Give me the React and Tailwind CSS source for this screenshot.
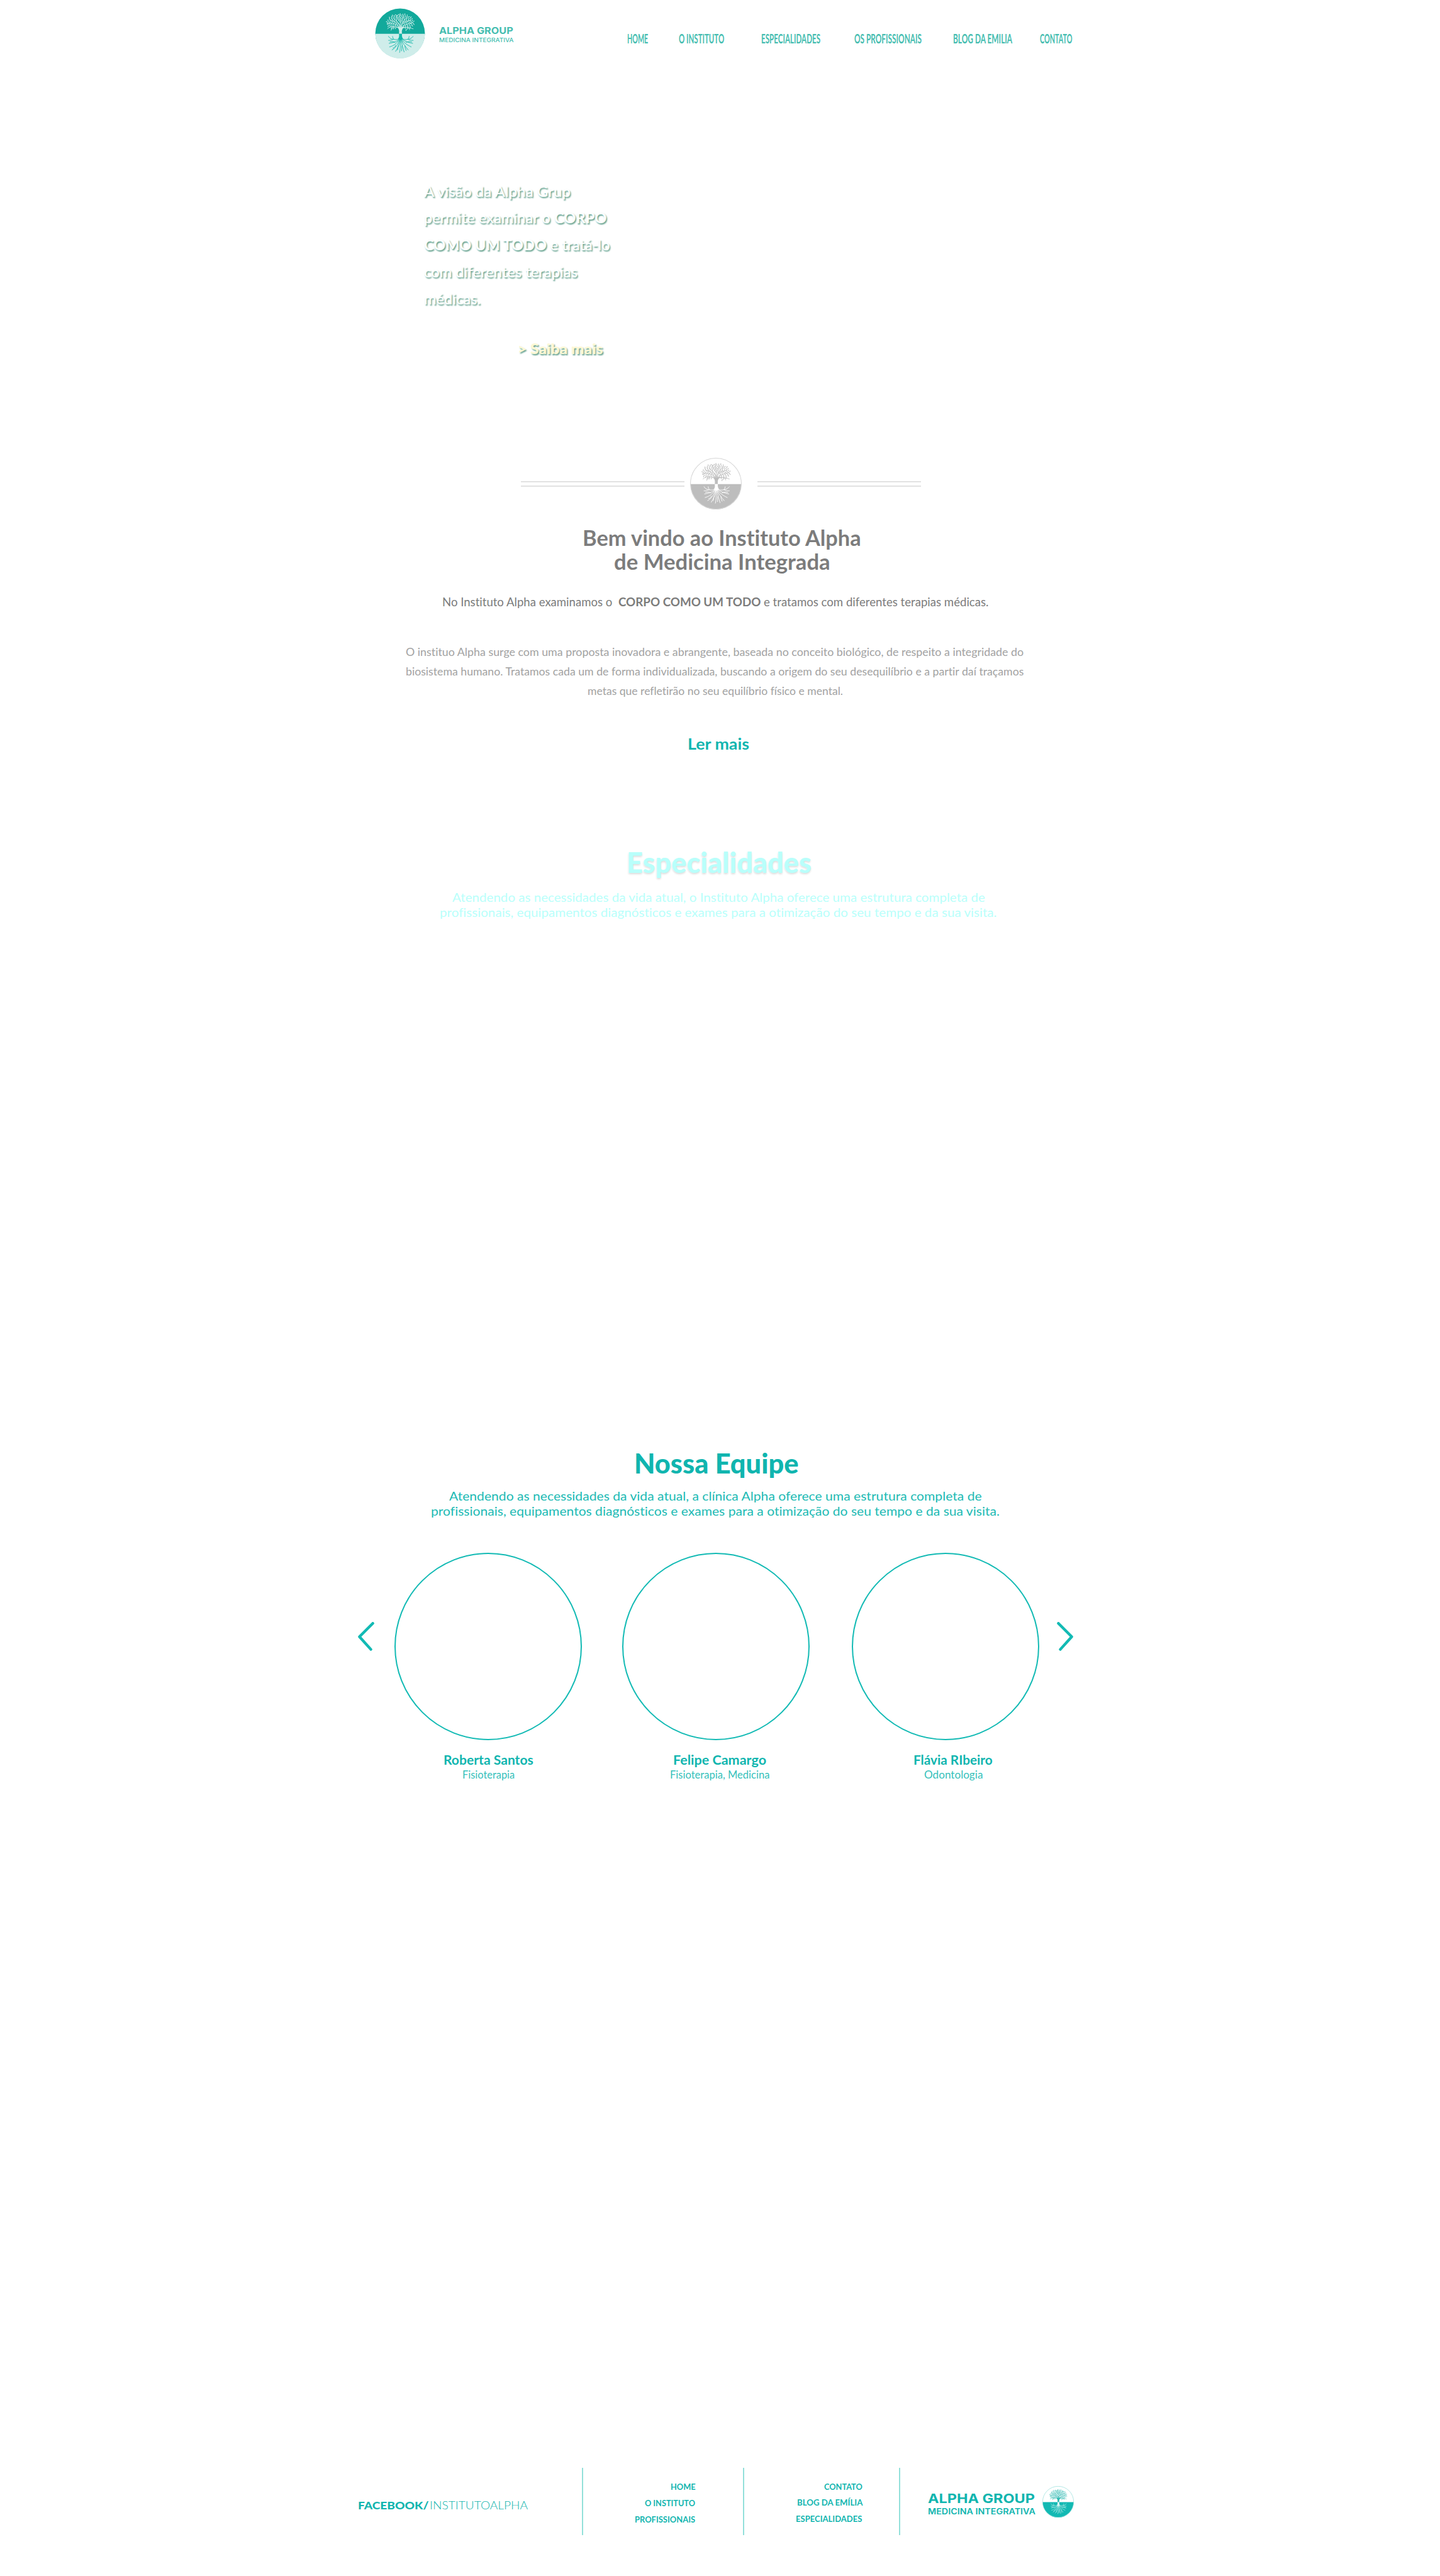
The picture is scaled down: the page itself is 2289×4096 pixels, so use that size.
import { useLayoutEffect, useRef } from "react";

/* One line of text, set to the width of its box. */
function Line({ className = "", children }) {
  const box = useRef(null);
  const text = useRef(null);
  useLayoutEffect(() => {
    const natural = text.current.offsetWidth;
    if (natural) {
      text.current.style.transform = `scaleX(${box.current.getBoundingClientRect().width / natural})`;
    }
  }, []);
  return (
    <div ref={box} className={"shrink-0 whitespace-nowrap " + className}>
      <span ref={text} className="inline-block origin-left whitespace-pre align-top">
        {children}
      </span>
    </div>
  );
}

const leaves = Array.from({ length: 135 }, (_, i) => {
  const r = Math.sqrt((i + 3) / 138);
  const a = i * 2.39996;
  return {
    x: 50.5 + 28 * r * Math.cos(a),
    y: 28 + 17 * r * Math.sin(a),
    turn: (a * 180) / Math.PI + (i % 3) * 35 - 35,
  };
}).filter((l) => !(l.y > 38 && l.x > 41 && l.x < 60));

const branches = [
  "M50 42 C48 37 40 37 34 37 C30 37 27 39 25 41",
  "M50 40 C46 33 40 31 33 30 C29 29 26 30 24 31",
  "M50 38 C48 30 43 25 37 20",
  "M51 38 C51 30 50 22 49 13",
  "M51 38 C54 30 58 24 64 18",
  "M52 40 C57 33 64 31 74 29",
  "M52 42 C56 37 64 37 76 41",
  "M44 31 C42 28 38 26 31 24",
  "M56 30 C60 27 66 25 71 24",
  "M50 28 C46 23 44 19 43 14",
  "M52 28 C55 23 56 18 56 14",
  "M38 37 C35 39 33 42 32 44",
  "M64 37 C67 39 68 41 69 43",
];

const roots = [
  "M50 58 C46 65 38 62 33 61 C30 60 28 58 27 56",
  "M36 62 C32 64 29 64 27 64",
  "M49 60 C45 67 37 68 28 70",
  "M48 62 C44 70 37 75 29 77",
  "M49 62 C47 71 41 79 34 83",
  "M50 62 C49 72 45 80 41 86",
  "M51 62 C50 73 51 80 49 88",
  "M52 62 C53 72 56 80 58 87",
  "M52 62 C55 70 61 77 66 83",
  "M53 61 C57 69 64 73 72 77",
  "M53 60 C58 66 66 68 75 70",
  "M52 58 C56 65 64 62 69 61 C72 60 74 58 76 56",
  "M66 62 C70 64 73 64 76 64",
  "M40 68 C36 66 34 66 30 67",
  "M41 74 C40 78 38 79 36 79",
  "M47 74 C45 77 46 80 45 83",
  "M54 74 C52 78 54 81 53 85",
  "M60 75 C59 79 61 80 62 84",
  "M62 68 C66 66 69 66 73 67",
  "M38 62 C36 60 35 58 35 56",
  "M65 62 C67 60 68 58 68 56",
];

function Emblem({ sky, soil, tree, root, ring, className }) {
  return (
    <svg viewBox="0 0 100 100" className={"shrink-0 " + className}>
      <circle cx="50" cy="50" r="49.3" fill={sky} />
      <path d="M.7 50.8 A49.3 49.3 0 0 0 99.3 50.8 Z" fill={soil} />
      <circle cx="50" cy="50" r="49.3" fill="none" stroke={ring} strokeWidth="1.3" />
      <g fill="none" stroke={tree} strokeWidth="1.1" strokeLinecap="round">
        {branches.map((d) => (
          <path key={d} d={d} />
        ))}
      </g>
      <path d="M47.8 50.8 C48.6 44 48 40 42 37 L50 38 L60 37 C54 40 53 44 53.8 50.8 Z" fill={tree} />
      {leaves.map((l, i) => (
        <ellipse key={i} cx={l.x} cy={l.y} rx="1.7" ry=".75" fill={tree} transform={`rotate(${l.turn} ${l.x} ${l.y})`} />
      ))}
      <g fill="none" stroke={root} strokeWidth="1.1" strokeLinecap="round">
        {roots.map((d) => (
          <path key={d} d={d} />
        ))}
      </g>
      <path d="M47.8 50.8 H53.8 C53.4 56 54 58 56 61 L50.6 64 L46 61 C48 58 48.4 56 47.8 50.8 Z" fill={root} />
    </svg>
  );
}

const arrow = "mt-[110.4px] h-[46px] w-[26px] shrink-0";

function Member({ shift, name, nameWidth, role, roleWidth }) {
  return (
    <div className="flex w-[298px] shrink-0 flex-col">
      <div className="size-[298px] rounded-full border-2 border-[#12bab4]" />
      <div className={"mt-[18.4px] flex flex-col items-center " + shift}>
        <Line className={"text-[20.5px] leading-[26.6px] font-bold " + nameWidth}>{name}</Line>
        <Line className={"text-[17.5px] leading-[20px] font-normal text-[#35c1bb] " + roleWidth}>{role}</Line>
      </div>
    </div>
  );
}

export default function App() {
  return (
    <div className="h-[4096px] w-[2289px] overflow-hidden bg-white font-['Lato',sans-serif] text-[#10b5af] [font-variant-ligatures:none]">
      <header className="flex h-[107px] items-start pl-[595.8px] text-[#45bdb0]">
        <Emblem className="mt-[13.3px] size-[80px]" sky="#12a99b" soil="#cfedea" tree="#cfedea" root="#12b5a8" ring="#cfedea00" />
        <div className="mt-[40px] ml-[22px] font-['Inter',sans-serif]">
          <Line className="w-[118px] text-[15px] leading-[17px] font-bold">ALPHA GROUP</Line>
          <Line className="mt-[1px] w-[118px] text-[9px] leading-[12px] font-medium">MEDICINA INTEGRATIVA</Line>
        </div>
        <nav className="mt-[48.5px] ml-[180.8px] flex text-[20.5px] leading-[24px] font-bold">
          <Line className="w-[33.5px]">HOME</Line>
          <Line className="ml-[48.6px] w-[72.3px]">O INSTITUTO</Line>
          <Line className="ml-[58.7px] w-[94.2px]">ESPECIALIDADES</Line>
          <Line className="ml-[53.9px] w-[106.9px]">OS PROFISSIONAIS</Line>
          <Line className="ml-[50.6px] w-[94.2px]">BLOG DA EMILIA</Line>
          <Line className="ml-[43.6px] w-[51.6px]">CONTATO</Line>
        </nav>
      </header>

      <section className="h-[621px] pt-[175.6px] pl-[674px] text-[23.4px] leading-[42.8px] font-medium text-white [text-shadow:1.5px_1.5px_2px_#5f9f8c]">
        <Line className="w-[232.6px]">A visão da Alpha Grup</Line>
        <Line className="w-[290.5px]">permite examinar o <b>CORPO</b></Line>
        <Line className="w-[296px]"><b>COMO UM TODO</b> e tratá-lo</Line>
        <Line className="w-[243.5px]">com diferentes terapias</Line>
        <Line className="w-[90px]">médicas.</Line>
        <Line className="mt-[42px] ml-[148.5px] w-[135.5px] leading-[30px] font-black text-[#fff8d4]">&gt; Saiba mais</Line>
      </section>

      <section className="text-[#7c7c7c]">
        <div className="flex h-[82px] items-center pl-[827.8px]">
          <div className="h-[9px] w-[260.5px] border-y-2 border-[#e2e2e2]" />
          <Emblem className="mx-[9.1px] size-[82px]" sky="#ffffff" soil="#bdbdbd" tree="#bdbdbd" root="#ffffff" ring="#d6d6d6" />
          <div className="ml-[15.2px] h-[9px] w-[260.4px] border-y-2 border-[#e2e2e2]" />
        </div>
        <div className="mt-[25.9px] text-[34.5px] leading-[37.8px] font-bold">
          <Line className="ml-[926px] w-[443px]">Bem vindo ao Instituto Alpha</Line>
          <Line className="ml-[975.5px] w-[344px]">de Medicina Integrada</Line>
        </div>
        <div className="mt-[33.7px] ml-[702.9px] flex text-[18.5px] leading-[24px]">
          <Line className="w-[270px]">No Instituto Alpha examinamos o</Line>
          <Line className="ml-[9.8px] w-[226.1px] font-bold">CORPO COMO UM TODO</Line>
          <Line className="ml-[5.2px] w-[357px]">e tratamos com diferentes terapias médicas.</Line>
        </div>
        <div className="mt-[53.2px] text-[16.8px] leading-[30.6px] text-[#a2a2a2]">
          <Line className="ml-[645.2px] w-[982.5px]">O instituo Alpha surge com uma proposta inovadora e abrangente, baseada no conceito biológico, de respeito a integridade do</Line>
          <Line className="ml-[645.2px] w-[982.5px]">biosistema humano. Tratamos cada um de forma individualizada, buscando a origem do seu desequilíbrio e a partir daí traçamos</Line>
          <Line className="ml-[933.7px] w-[405.7px]">metas que refletirão no seu equilíbrio físico e mental.</Line>
        </div>
        <Line className="mt-[52.6px] ml-[1093.4px] w-[98.5px] text-[25px] leading-[30px] font-bold text-[#10b5af]">Ler mais</Line>
      </section>

      <section className="mt-[149px] h-[955px] text-[#b9fffb]">
        <Line className="ml-[996px] w-[293.5px] text-[45px] leading-[50px] font-black [text-shadow:0_2px_3px_#00000022]">Especialidades</Line>
        <div className="mt-[19.6px] text-[19.5px] leading-[23.8px]">
          <Line className="ml-[719px] w-[847.4px]">Atendendo as necessidades da vida atual, o Instituto Alpha oferece uma estrutura completa de</Line>
          <Line className="ml-[699px] w-[886px]">profissionais, equipamentos diagnósticos e exames para a otimização do seu tempo e da sua visita.</Line>
        </div>
      </section>

      <section>
        <Line className="ml-[1007.5px] w-[261px] text-[43.5px] leading-[50px] font-black">Nossa Equipe</Line>
        <div className="mt-[16.5px] text-[19.5px] leading-[23.8px] text-[#20bab4]">
          <Line className="ml-[714.2px] w-[846.5px]">Atendendo as necessidades da vida atual, a clínica Alpha oferece uma estrutura completa de</Line>
          <Line className="ml-[685px] w-[904.5px]">profissionais, equipamentos diagnósticos e exames para a otimização do seu tempo e da sua visita.</Line>
        </div>
        <div className="mt-[54px] flex items-start pl-[569px]">
          <svg viewBox="0 0 26 46" className={arrow} fill="none" stroke="#12bab4" strokeWidth="4.4" strokeLinecap="round" strokeLinejoin="round">
            <path d="M23.6 2.2 L2.4 23.5 L20.5 43.6" />
          </svg>
          <div className="ml-[32.4px] flex">
            <Member shift="pl-0" name="Roberta Santos" nameWidth="w-[143px]" role="Fisioterapia" roleWidth="w-[83.5px]" />
            <div className="w-[63.3px]" />
            <Member shift="pl-[12.5px]" name="Felipe Camargo" nameWidth="w-[148px]" role="Fisioterapia, Medicina" roleWidth="w-[158px]" />
            <div className="w-[67px]" />
            <Member shift="pl-[25px]" name="Flávia RIbeiro" nameWidth="w-[125.5px]" role="Odontologia" roleWidth="w-[93px]" />
          </div>
          <svg viewBox="0 0 26 46" className={arrow + " ml-[28px]"} fill="none" stroke="#12bab4" strokeWidth="4.4" strokeLinecap="round" strokeLinejoin="round">
            <path d="M2.4 2.2 L23.6 23.5 L5.5 43.6" />
          </svg>
        </div>
      </section>

      <footer className="mt-[1092.4px] flex h-[107px] items-start pl-[569.3px]">
        <div className="mt-[46.7px] flex text-[17.8px] leading-[24px]">
          <Line className="w-[112px] font-black">FACEBOOK/</Line>
          <Line className="ml-[2px] w-[156px] font-light">INSTITUTOALPHA</Line>
        </div>
        <div className="ml-[85.5px] h-[107px] w-[2px] bg-[#93e0da]" />
        <div className="mt-[18px] flex w-[178.6px] flex-col items-end text-[13.6px] leading-[25.7px] font-bold">
          <Line className="w-[39.6px]">HOME</Line>
          <Line className="w-[80.4px]">O INSTITUTO</Line>
          <Line className="w-[96px]">PROFISSIONAIS</Line>
        </div>
        <div className="ml-[75.5px] h-[107px] w-[2px] bg-[#93e0da]" />
        <div className="mt-[17.3px] flex w-[188px] flex-col items-end text-[13.6px] leading-[25.7px] font-bold">
          <Line className="w-[61px]">CONTATO</Line>
          <Line className="w-[104px]">BLOG DA EMÍLIA</Line>
          <Line className="w-[105.5px]">ESPECIALIDADES</Line>
        </div>
        <div className="ml-[58.4px] h-[107px] w-[2px] bg-[#93e0da]" />
        <div className="mt-[36.4px] ml-[44px] font-['Inter',sans-serif]">
          <Line className="w-[170.4px] text-[20.5px] leading-[24px] font-bold">ALPHA GROUP</Line>
          <Line className="mt-[2px] w-[170.4px] text-[12.6px] leading-[14px] font-semibold">MEDICINA INTEGRATIVA</Line>
        </div>
        <Emblem className="mt-[28.7px] ml-[11.4px] size-[50px]" sky="#ffffff" soil="#12b9b3" tree="#2fb9b2" root="#d8f4f2" ring="#8adcd7" />
      </footer>
    </div>
  );
}
